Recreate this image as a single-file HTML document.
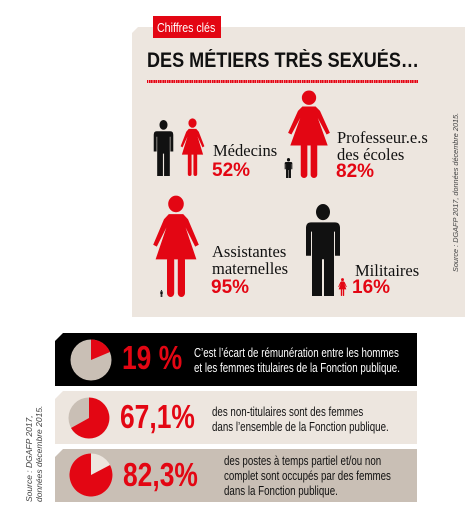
<!DOCTYPE html>
<html><head><meta charset="utf-8"><style>
body{margin:0;width:465px;height:510px;background:#fff;position:relative;overflow:hidden;font-family:"Liberation Sans",sans-serif}
.a{position:absolute}
.panel{left:132px;top:27px;width:333px;height:290px;background:#ede6df;clip-path:polygon(6px 0,100% 0,100% 100%,0 100%,0 6px)}
.tab{left:153px;top:16px;width:68px;height:22px;background:#e30613}
.tabt{left:157px;top:16px;color:#fff;font-size:12.5px;line-height:24px;white-space:nowrap;transform:scaleX(.85);transform-origin:left}
.title{left:147px;top:49px;font-size:21px;font-weight:bold;color:#111;transform:scaleX(.86);transform-origin:left;white-space:nowrap}
.dots{left:147px;top:80px;width:271px;height:3px;background:repeating-linear-gradient(90deg,#e30613 0 1.2px,#f3a0a5 1.2px 1.8px)}
.lbl{font-family:"Liberation Serif",serif;font-size:16.5px;color:#111;line-height:17px;white-space:nowrap}
.pct{font-size:19px;font-weight:bold;color:#e30613;white-space:nowrap}
.src{font-size:8.5px;color:#444;font-style:italic;white-space:nowrap;transform:rotate(-90deg);transform-origin:left top}
.bar{left:55px;width:362px;height:53px}
.big{font-size:33px;font-weight:bold;color:#e30613;transform:scaleX(.8);transform-origin:left;white-space:nowrap}
.txt{font-size:12.5px;line-height:15px;white-space:nowrap;transform:scaleX(.78);transform-origin:left}
</style></head><body>
<svg width="0" height="0" style="position:absolute">
<defs>
<symbol id="w" viewBox="0 0 40 80" preserveAspectRatio="none"><circle cx="20" cy="7" r="6.5"/><path d="M14 15h12l4 4 9 20-3 1.5-8-15 9 25H3l9-25-8 15-3-1.5 9-20z"/><rect x="12.5" y="48" width="6" height="32" rx="3"/><rect x="21.5" y="48" width="6" height="32" rx="3"/></symbol>
<symbol id="m" viewBox="0 0 40 80" preserveAspectRatio="none"><circle cx="20" cy="7" r="7"/><path d="M8 16h24q5 0 5 5v24h-5V24h-1v56h-10V48h-2v32H9V24H8v21H3V21q0-5 5-5z"/></symbol>
</defs></svg>
<div class="a panel"></div>
<div class="a tab"></div>
<div class="a tabt">Chiffres clés</div>
<div class="a title">DES MÉTIERS TRÈS SEXUÉS…</div>
<div class="a dots"></div>

<svg class="a" style="left:152px;top:120px" width="23" height="56" fill="#111"><use href="#m" width="23" height="56"/></svg>
<svg class="a" style="left:180px;top:118px" width="25" height="58" fill="#e30613"><use href="#w" width="25" height="58"/></svg>
<div class="a lbl" style="left:213px;top:142px">Médecins</div>
<div class="a pct" style="left:212px;top:160px">52%</div>

<svg class="a" style="left:284px;top:158px" width="9" height="20" fill="#111"><use href="#m" width="9" height="20"/></svg>
<svg class="a" style="left:287px;top:90px" width="44" height="88" fill="#e30613"><use href="#w" width="44" height="88"/></svg>
<div class="a lbl" style="left:337px;top:129px">Professeur.e.s</div>
<div class="a lbl" style="left:337px;top:146px">des écoles</div>
<div class="a pct" style="left:336px;top:161px">82%</div>

<svg class="a" style="left:152px;top:195px" width="48" height="102" fill="#e30613"><use href="#w" width="48" height="102"/></svg>
<svg class="a" style="left:160px;top:290px" width="3" height="7" fill="#111"><use href="#m" width="3" height="7"/></svg>
<div class="a lbl" style="left:212px;top:243px">Assistantes</div>
<div class="a lbl" style="left:212px;top:260px">maternelles</div>
<div class="a pct" style="left:211px;top:277px">95%</div>

<svg class="a" style="left:303px;top:204px" width="40" height="92" fill="#111"><use href="#m" width="40" height="92"/></svg>
<svg class="a" style="left:338px;top:278px" width="9" height="18" fill="#e30613"><use href="#w" width="9" height="18"/></svg>
<div class="a lbl" style="left:355px;top:262px">Militaires</div>
<div class="a pct" style="left:352px;top:277px">16%</div>

<div class="a src" style="left:451px;top:272px;font-size:7.3px">Source : DGAFP 2017, données décembre 2015.</div>

<div class="a bar" style="top:333px;background:#000;clip-path:polygon(8px 0,100% 0,100% 100%,0 100%,0 8px)"></div>
<div class="a bar" style="top:391px;background:#ede6df;clip-path:polygon(8px 0,100% 0,100% 100%,0 100%,0 8px)"></div>
<div class="a bar" style="top:449px;background:#c9bfb5;clip-path:polygon(8px 0,100% 0,100% 100%,0 100%,0 8px)"></div>

<svg class="a" style="left:70px;top:339px" width="42" height="42"><circle cx="21" cy="21" r="20.5" fill="#c9bfb5"/><path d="M21 21V0.5A20.5 20.5 0 0 1 40 13z" fill="#e30613"/></svg>
<div class="a big" style="left:122px;top:339px">19 %</div>
<div class="a txt" style="left:194px;top:346px;color:#fff">C’est l’écart de rémunération entre les hommes<br>et les femmes titulaires de la Fonction publique.</div>

<svg class="a" style="left:68px;top:397px" width="42" height="42"><circle cx="21" cy="21" r="20.5" fill="#c9bfb5"/><path d="M21 21V0.5A20.5 20.5 0 1 1 3 31z" fill="#e30613"/></svg>
<div class="a big" style="left:120px;top:398px">67,1%</div>
<div class="a txt" style="left:212px;top:405px;color:#111">des non-titulaires sont des femmes<br>dans l’ensemble de la Fonction publique.</div>

<svg class="a" style="left:69px;top:453px" width="44" height="44"><circle cx="22" cy="22" r="21.5" fill="#ede6df"/><path d="M22 22L41 12A21.5 21.5 0 1 1 22 0.5z" fill="#e30613"/></svg>
<div class="a big" style="left:123px;top:456px">82,3%</div>
<div class="a txt" style="left:224px;top:454px;color:#111">des postes à temps partiel et/ou non<br>complet sont occupés par des femmes<br>dans la Fonction publique.</div>

<div class="a src" style="left:24px;top:502px;line-height:10px">Source : DGAFP 2017,<br>données décembre 2015.</div>
</body></html>
